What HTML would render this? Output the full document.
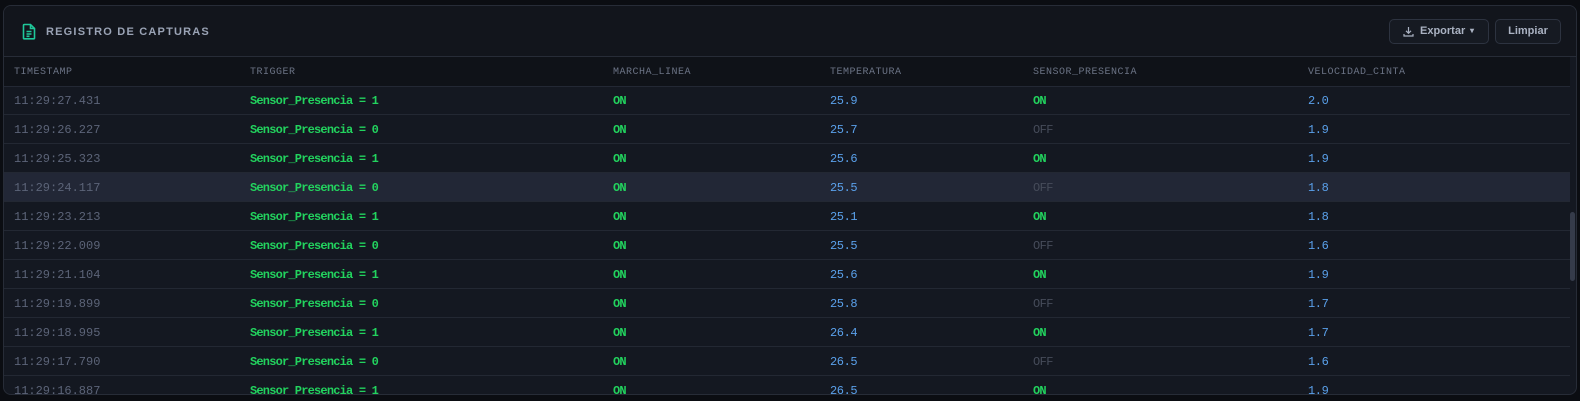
<!DOCTYPE html>
<html><head><style>
*{box-sizing:border-box;margin:0;padding:0}
body{width:1580px;height:401px;background:#0b0d12;overflow:hidden;font-family:"Liberation Mono",monospace}
.panel{position:absolute;left:3px;top:5px;width:1574px;height:390px;background:#141821;border:1px solid #272c37;border-radius:8px;overflow:hidden}
.hdr{position:absolute;left:0;top:0;width:100%;height:51px;border-bottom:1px solid #272c37;background:#12151c}
.title{position:absolute;left:42px;top:20px;font-family:"Liberation Sans",sans-serif;font-weight:bold;font-size:11px;letter-spacing:1.2px;color:#9aa3b5}
.icon{position:absolute;left:18px;top:17px}
.btn{position:absolute;top:13px;height:25px;border:1px solid #2d3340;border-radius:5px;background:#161a22;color:#aab2c2;font-family:"Liberation Sans",sans-serif;font-weight:bold;font-size:11px;line-height:23px}
.th{position:absolute;top:51px;left:0;width:1566px;height:30px;background:#0f1218;border-bottom:1px solid #232834}
.th span{position:absolute;top:10px;font-size:10px;color:#6b7385;letter-spacing:.5px}
.row{position:absolute;left:0;width:1566px;height:29px;border-bottom:1px solid #232833}
.row span{position:absolute;top:8px;font-size:12px}
.ts{color:#5c6478}
.tr,.on{color:#22d35e;font-weight:bold;letter-spacing:-0.8px}
.num{color:#5aa0ea;letter-spacing:-0.4px}.off{color:#464c5a;letter-spacing:-0.6px}
.sb{position:absolute;left:1566px;top:206px;width:5px;height:69px;background:#353b4a;border-radius:3px}
</style></head><body>
<div class="panel">
<div class="hdr">
<svg class="icon" width="14" height="17" viewBox="0 0 14 17" fill="none" stroke="#1fc89a" stroke-width="1.6"><path d="M2 1.5h6.5l4 4V15a.8.8 0 0 1-.8.8H2.3a.8.8 0 0 1-.8-.8V2.3a.8.8 0 0 1 .8-.8z"/><path d="M8.5 1.5v4h4"/><path d="M4.5 8.5h5M4.5 11h5M4.5 13.3h3"/></svg>
<div class="title">REGISTRO DE CAPTURAS</div>
<div class="btn" style="left:1385px;width:100px"><svg style="position:absolute;left:13px;top:6px" width="11" height="11" viewBox="0 0 11 11" fill="none" stroke="#aab2c2" stroke-width="1.2"><path d="M5.5 1v6M3 4.8l2.5 2.5L8 4.8M1 8v2h9V8"/></svg><span style="position:absolute;left:30px">Exportar</span><span style="position:absolute;left:80px;top:-1px;font-size:8px">▾</span></div>
<div class="btn" style="left:1491px;width:66px;text-align:center">Limpiar</div>
</div>
<div class="th"><span style="left:10px">TIMESTAMP</span><span style="left:246px">TRIGGER</span><span style="left:609px">MARCHA_LINEA</span><span style="left:826px">TEMPERATURA</span><span style="left:1029px">SENSOR_PRESENCIA</span><span style="left:1304px">VELOCIDAD_CINTA</span></div>
<div class="sb"></div>
</div>
<div style="position:absolute;left:4px;top:86px">
<div class="row" style="top:0"><span class="ts" style="left:10px">11:29:27.431</span><span class="tr" style="left:246px">Sensor_Presencia = 1</span><span class="on" style="left:609px">ON</span><span class="num" style="left:826px">25.9</span><span class="on" style="left:1029px">ON</span><span class="num" style="left:1304px">2.0</span></div>
<div class="row" style="top:29px"><span class="ts" style="left:10px">11:29:26.227</span><span class="tr" style="left:246px">Sensor_Presencia = 0</span><span class="on" style="left:609px">ON</span><span class="num" style="left:826px">25.7</span><span class="off" style="left:1029px">OFF</span><span class="num" style="left:1304px">1.9</span></div>
<div class="row" style="top:58px"><span class="ts" style="left:10px">11:29:25.323</span><span class="tr" style="left:246px">Sensor_Presencia = 1</span><span class="on" style="left:609px">ON</span><span class="num" style="left:826px">25.6</span><span class="on" style="left:1029px">ON</span><span class="num" style="left:1304px">1.9</span></div>
<div class="row" style="top:87px;background:#222736"><span class="ts" style="left:10px">11:29:24.117</span><span class="tr" style="left:246px">Sensor_Presencia = 0</span><span class="on" style="left:609px">ON</span><span class="num" style="left:826px">25.5</span><span class="off" style="left:1029px">OFF</span><span class="num" style="left:1304px">1.8</span></div>
<div class="row" style="top:116px"><span class="ts" style="left:10px">11:29:23.213</span><span class="tr" style="left:246px">Sensor_Presencia = 1</span><span class="on" style="left:609px">ON</span><span class="num" style="left:826px">25.1</span><span class="on" style="left:1029px">ON</span><span class="num" style="left:1304px">1.8</span></div>
<div class="row" style="top:145px"><span class="ts" style="left:10px">11:29:22.009</span><span class="tr" style="left:246px">Sensor_Presencia = 0</span><span class="on" style="left:609px">ON</span><span class="num" style="left:826px">25.5</span><span class="off" style="left:1029px">OFF</span><span class="num" style="left:1304px">1.6</span></div>
<div class="row" style="top:174px"><span class="ts" style="left:10px">11:29:21.104</span><span class="tr" style="left:246px">Sensor_Presencia = 1</span><span class="on" style="left:609px">ON</span><span class="num" style="left:826px">25.6</span><span class="on" style="left:1029px">ON</span><span class="num" style="left:1304px">1.9</span></div>
<div class="row" style="top:203px"><span class="ts" style="left:10px">11:29:19.899</span><span class="tr" style="left:246px">Sensor_Presencia = 0</span><span class="on" style="left:609px">ON</span><span class="num" style="left:826px">25.8</span><span class="off" style="left:1029px">OFF</span><span class="num" style="left:1304px">1.7</span></div>
<div class="row" style="top:232px"><span class="ts" style="left:10px">11:29:18.995</span><span class="tr" style="left:246px">Sensor_Presencia = 1</span><span class="on" style="left:609px">ON</span><span class="num" style="left:826px">26.4</span><span class="on" style="left:1029px">ON</span><span class="num" style="left:1304px">1.7</span></div>
<div class="row" style="top:261px"><span class="ts" style="left:10px">11:29:17.790</span><span class="tr" style="left:246px">Sensor_Presencia = 0</span><span class="on" style="left:609px">ON</span><span class="num" style="left:826px">26.5</span><span class="off" style="left:1029px">OFF</span><span class="num" style="left:1304px">1.6</span></div>
<div class="row" style="top:290px;height:18px;overflow:hidden;border:none"><span class="ts" style="left:10px">11:29:16.887</span><span class="tr" style="left:246px">Sensor_Presencia = 1</span><span class="on" style="left:609px">ON</span><span class="num" style="left:826px">26.5</span><span class="on" style="left:1029px">ON</span><span class="num" style="left:1304px">1.9</span></div>
</div>
</body></html>
